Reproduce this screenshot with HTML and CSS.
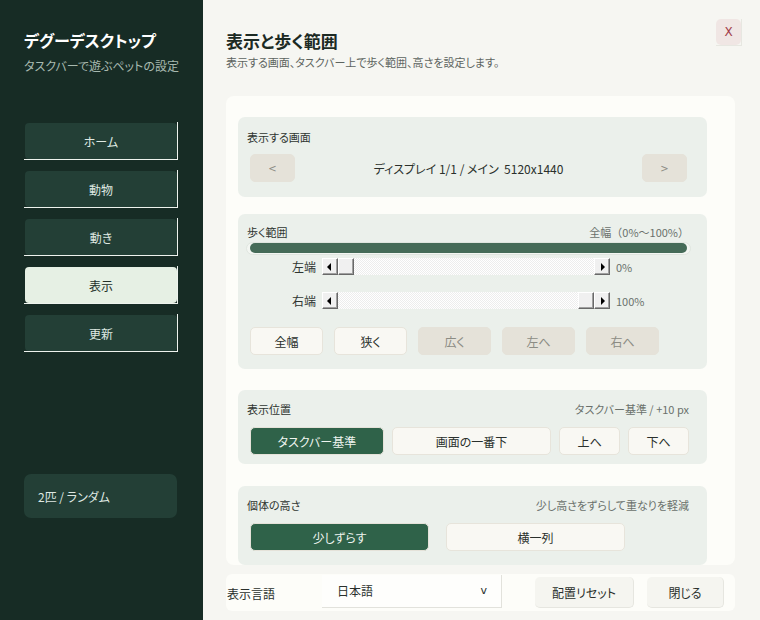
FILE: index.html
```html
<!DOCTYPE html>
<html lang="ja">
<head>
<meta charset="utf-8">
<title>デグーデスクトップ</title>
<link rel="stylesheet" href="styles.css">
</head>
<body>
<div class="app">
  <aside class="sidebar">
    <h1 class="brand">デグーデスクトップ</h1>
    <p class="brand-sub">タスクバーで遊ぶペットの設定</p>
    <nav class="nav">
      <button class="nav-item"><span class="nav-face">ホーム</span></button>
      <button class="nav-item"><span class="nav-face">動物</span></button>
      <button class="nav-item"><span class="nav-face">動き</span></button>
      <button class="nav-item is-active"><span class="nav-face">表示</span></button>
      <button class="nav-item"><span class="nav-face">更新</span></button>
    </nav>
    <div class="status-card">2匹 / ランダム</div>
  </aside>

  <main class="main">
    <header class="page-head">
      <div class="page-titles">
        <h2 class="page-title">表示と歩く範囲</h2>
        <p class="page-sub">表示する画面、タスクバー上で歩く範囲、高さを設定します。</p>
      </div>
      <button class="close-btn">X</button>
    </header>

    <div class="card">
      <section class="section sec-screen">
        <div class="sec-head"><span class="sec-label">表示する画面</span></div>
        <div class="screen-row">
          <button class="btn btn-muted btn-arrow">&lt;</button>
          <span class="screen-name">ディスプレイ 1/1 / メイン&nbsp;&nbsp;5120x1440</span>
          <button class="btn btn-muted btn-arrow">&gt;</button>
        </div>
      </section>

      <section class="section sec-range">
        <div class="sec-head">
          <span class="sec-label">歩く範囲</span>
          <span class="sec-hint wide-punct">全幅（0%〜100%）</span>
        </div>
        <div class="range-frame"><div class="range-fill"></div></div>

        <div class="slider-row row-left">
          <span class="slider-label">左端</span>
          <div class="scrollbar">
            <span class="sb-btn sb-left"></span>
            <span class="sb-track"><span class="sb-thumb"></span></span>
            <span class="sb-btn sb-right"></span>
          </div>
          <span class="slider-value">0%</span>
        </div>
        <div class="slider-row row-right">
          <span class="slider-label">右端</span>
          <div class="scrollbar">
            <span class="sb-btn sb-left"></span>
            <span class="sb-track"><span class="sb-thumb at-end"></span></span>
            <span class="sb-btn sb-right"></span>
          </div>
          <span class="slider-value">100%</span>
        </div>

        <div class="btn-row range-actions">
          <button class="btn btn-light">全幅</button>
          <button class="btn btn-light">狭く</button>
          <button class="btn btn-muted">広く</button>
          <button class="btn btn-muted">左へ</button>
          <button class="btn btn-muted">右へ</button>
        </div>
      </section>

      <section class="section sec-position">
        <div class="sec-head">
          <span class="sec-label">表示位置</span>
          <span class="sec-hint">タスクバー基準 / +10 px</span>
        </div>
        <div class="btn-row pos-actions">
          <button class="btn btn-primary w-taskbar">タスクバー基準</button>
          <button class="btn btn-light w-bottom">画面の一番下</button>
          <button class="btn btn-light w-step">上へ</button>
          <button class="btn btn-light w-step">下へ</button>
        </div>
      </section>

      <section class="section sec-height">
        <div class="sec-head">
          <span class="sec-label">個体の高さ</span>
          <span class="sec-hint">少し高さをずらして重なりを軽減</span>
        </div>
        <div class="btn-row height-actions">
          <button class="btn btn-primary w-half">少しずらす</button>
          <button class="btn btn-light w-half">横一列</button>
        </div>
      </section>
    </div>

    <footer class="footer-bar">
      <span class="lang-label">表示言語</span>
      <div class="lang-select"><span>日本語</span><span class="caret">v</span></div>
      <button class="foot-btn foot-reset">配置リセット</button>
      <button class="foot-btn foot-close">閉じる</button>
    </footer>
  </main>
</div>
</body>
</html>
```

FILE: styles.css
```css
* {
  box-sizing: border-box;
}

html, body {
  margin: 0;
  padding: 0;
}

body {
  width: 760px;
  height: 620px;
  overflow: hidden;
  background: #f6f6f2;
  font-family: "Noto Sans CJK JP", "Noto Sans", sans-serif;
  font-feature-settings: "palt" 1;
  color: #2a302c;
}

button {
  font-family: inherit;
  font-feature-settings: inherit;
  cursor: pointer;
}

.app {
  display: flex;
  height: 620px;
}

/* ---------- sidebar ---------- */

.sidebar {
  width: 203px;
  flex: none;
  background: #172c25;
  padding: 29px 0 0 24px;
  display: flex;
  flex-direction: column;
}

.brand {
  margin: 0;
  font-size: 16px;
  line-height: 22px;
  font-weight: 700;
  color: #ffffff;
}

.brand-sub {
  margin: 7px 0 0;
  font-size: 12px;
  line-height: 16px;
  color: #a7b9af;
}

.nav {
  margin-top: 48px;
  display: flex;
  flex-direction: column;
  gap: 10px;
}

.nav-item {
  display: block;
  width: 154px;
  height: 38px;
  padding: 1px 0 0 1px;
  margin: 0;
  border: 0;
  border-right: 1px solid #eef3ee;
  border-bottom: 1px solid #eef3ee;
  background: transparent;
}

.nav-face {
  display: flex;
  align-items: center;
  justify-content: center;
  width: 152px;
  height: 36px;
  border-radius: 4px;
  background: #233f36;
  color: #dfe9e2;
  font-size: 12px;
}

.nav-item.is-active .nav-face {
  background: #e6f0e4;
  color: #25302a;
}

.status-card {
  margin-top: 122px;
  width: 153px;
  height: 44px;
  border-radius: 7px;
  background: #233f36;
  color: #dfe8e2;
  font-size: 12px;
  display: flex;
  align-items: center;
  padding-left: 14px;
}

/* ---------- main ---------- */

.main {
  flex: 1;
  padding: 0 25px 0 23px;
  display: flex;
  flex-direction: column;
}

.page-head {
  display: flex;
  justify-content: space-between;
  align-items: flex-start;
  padding-top: 19px;
  margin-right: -7px;
  height: 96px;
}

.page-titles {
  padding-top: 11px;
}

.page-title {
  margin: 0;
  font-size: 17px;
  line-height: 22px;
  font-weight: 700;
  color: #1c2a24;
}

.page-sub {
  margin: 2px 0 0;
  font-size: 11px;
  line-height: 16px;
  color: #5d6460;
}

.close-btn {
  width: 26px;
  height: 27px;
  padding: 0;
  border: 0;
  border-right: 1px solid #e7e7e1;
  border-bottom: 1px solid #e7e7e1;
  background: transparent;
  position: relative;
  z-index: 0;
  font-size: 12px;
  color: #a23d4a;
  font-family: "DejaVu Sans", sans-serif;
}

/* rounded face inside the square outline */
.close-btn::before {
  content: "";
  position: absolute;
  inset: 0;
  border-radius: 5px;
  background: #f0e6e4;
  z-index: -1;
}

.card {
  width: 509px;
  height: 469px;
  background: #fdfdf9;
  border-radius: 8px;
  padding: 21px 28px 0 12px;
  overflow: hidden;
  display: flex;
  flex-direction: column;
  gap: 17px;
}

.section {
  flex: none;
  background: #ebf0eb;
  border-radius: 7px;
  padding: 11px 18px 14px 9px;
}

.sec-head {
  display: flex;
  justify-content: space-between;
  align-items: center;
  height: 16px;
  font-size: 11px;
  line-height: 16px;
}

.sec-label {
  color: #2f3531;
}

.sec-hint {
  color: #6a706b;
}

.wide-punct {
  font-feature-settings: normal;
}

/* display selector */

.sec-screen {
  padding-top: 12px;
  padding-bottom: 15px;
}

.screen-row {
  margin: 9px 2px 0 3px;
  display: flex;
  align-items: center;
  justify-content: space-between;
  height: 28px;
}

.screen-name {
  font-size: 12px;
  color: #2a302c;
}

/* buttons */

.btn {
  height: 28px;
  padding: 0;
  border-radius: 5px;
  font-size: 12px;
  display: flex;
  align-items: center;
  justify-content: center;
}

.btn-light {
  background: #f9f8f3;
  border: 1px solid #e7e4db;
  color: #2a302c;
}

.btn-muted {
  background: #e5e2d9;
  border: 1px solid #e5e2d9;
  color: #8c8c84;
}

.btn-primary {
  background: #2f6249;
  border: 1px solid #e5e2d9;
  color: #eef4ef;
}

.btn-arrow {
  width: 45px;
  font-family: "DejaVu Sans", sans-serif;
  font-size: 10px;
}

.btn-row {
  display: flex;
  margin-left: 3px;
}

/* walking range */

.sec-range {
  padding-top: 10px;
}

.range-frame {
  margin: 2px -2px 0 -1px;
  height: 13px;
  border: 1px solid #dfe5df;
  border-radius: 7px;
  background: #f3f6f2;
  padding: 0 3px;
}

.range-fill {
  height: 10px;
  border-radius: 5px;
  background: #456b58;
}

.slider-row {
  display: grid;
  grid-template-columns: 66px 288px auto;
  column-gap: 6px;
  align-items: center;
  margin-left: 3px;
  height: 17px;
}

.row-left {
  margin-top: 3px;
}

.row-right {
  margin-top: 17px;
}

.slider-label {
  text-align: right;
  font-size: 12px;
  color: #2f3531;
}

.slider-value {
  font-size: 11px;
  color: #6a706b;
}

.scrollbar {
  display: flex;
  height: 17px;
}

.sb-btn,
.sb-thumb {
  display: block;
  flex: none;
  width: 16px;
  height: 17px;
  background: #f0f0f0;
  border-style: solid;
  border-width: 1px;
  border-color: #ffffff #696969 #696969 #ffffff;
  box-shadow: inset -1px -1px 0 #a0a0a0;
  position: relative;
}

.sb-btn::after {
  content: "";
  position: absolute;
  top: 4px;
  width: 0;
  height: 0;
  border-top: 4px solid transparent;
  border-bottom: 4px solid transparent;
}

.sb-left::after {
  left: 4px;
  border-right: 4px solid #000;
}

.sb-right::after {
  left: 6px;
  border-left: 4px solid #000;
}

.sb-track {
  flex: 1;
  display: flex;
  background: repeating-conic-gradient(#ffffff 0 25%, #ededed 0 50%) 0 0 / 2px 2px;
}

.sb-thumb.at-end {
  margin-left: auto;
}

.range-actions {
  margin-top: 18px;
  gap: 11px;
}

.range-actions .btn {
  width: 73px;
}

/* position */

.sec-position {
  margin-top: 4px;
  padding-bottom: 9px;
}

.pos-actions {
  margin-top: 10px;
  gap: 8px;
}

.w-taskbar { width: 134px; }
.w-bottom { width: 160px; }
.w-step { width: 61px; }

/* height */

.sec-height {
  margin-top: 5px;
}

.height-actions {
  margin-top: 10px;
  gap: 17px;
}

.w-half { width: 179px; }

/* ---------- footer ---------- */

.footer-bar {
  margin-top: 9px;
  width: 509px;
  height: 37px;
  background: #fdfdf9;
  border-radius: 6px;
  display: flex;
  align-items: center;
  padding-left: 1px;
}

.lang-label {
  font-size: 12px;
  color: #2a302c;
  width: 48px;
  padding-top: 2px;
}

.lang-select {
  margin-left: 47px;
  width: 180px;
  height: 33px;
  align-self: flex-start;
  margin-top: 1px;
  border-right: 1px solid #e2e2dc;
  border-bottom: 1px solid #e2e2dc;
  background: #fefefc;
  display: flex;
  justify-content: space-between;
  align-items: center;
  padding: 0 14px 2px 15px;
  font-size: 12px;
  color: #2a302c;
}

.caret {
  font-family: "DejaVu Sans", sans-serif;
  font-size: 11px;
}

.foot-btn {
  height: 31px;
  padding: 0;
  border: 0;
  border-right: 1px solid #e6e6e0;
  border-bottom: 1px solid #e6e6e0;
  border-radius: 5px;
  background: #f5f5f0;
  font-size: 12px;
  color: #2a302c;
}

.foot-reset {
  margin-left: 33px;
  width: 99px;
}

.foot-close {
  margin-left: 13px;
  width: 77px;
}
```
